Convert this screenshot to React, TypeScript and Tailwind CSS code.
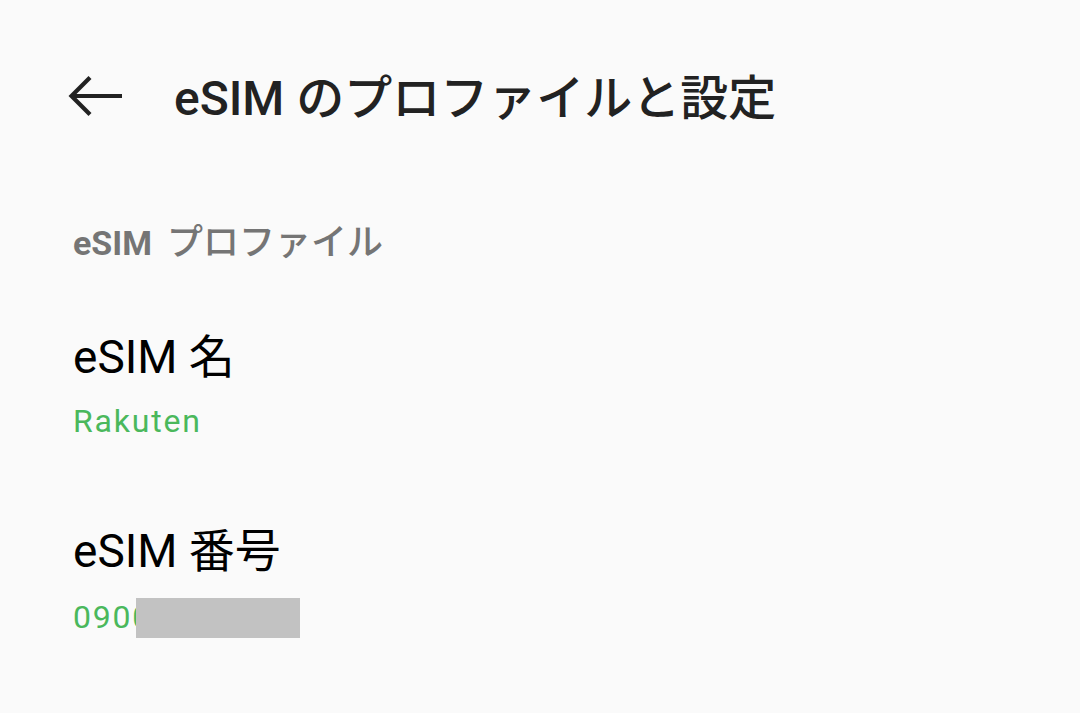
import React from "react";

export default function App() {
  return (
    <div
      className="min-h-screen w-full bg-[#fafafa]"
      style={{ fontFamily: 'Roboto, "Noto Sans CJK JP", sans-serif' }}
    >
      <div className="flex items-start pt-[75px] pl-[67px]">
        <svg
          width="56"
          height="40"
          viewBox="0 0 56 40"
          className="mt-[1px] shrink-0"
          fill="none"
          stroke="#222222"
          strokeWidth="4.2"
          strokeLinecap="butt"
          strokeLinejoin="miter"
        >
          <path d="M4 20 H55" />
          <path d="M23 1.5 L4.5 20 L23 38.5" />
        </svg>
        <h1 className="ml-[51px] text-[48px] leading-[48px] font-medium text-[#222222] whitespace-nowrap">
          eSIM のプロファイルと設定
        </h1>
      </div>

      <div className="pl-[73px]">
        <div className="mt-[103px] h-[34px] leading-[34px] text-[#757575] whitespace-nowrap">
          <span className="text-[34px] font-bold">eSIM</span>
          <span className="ml-[6px] text-[36px] font-medium"> プロファイル</span>
        </div>

        <div className="mt-[74px] text-[46px] leading-[46px] text-black whitespace-nowrap">
          eSIM 名
        </div>
        <div className="mt-[26px] text-[32px] leading-[31px] tracking-[1.8px] text-[#4ab85c] whitespace-nowrap">
          Rakuten
        </div>

        <div className="mt-[91px] text-[46px] leading-[46px] text-black whitespace-nowrap">
          eSIM 番号
        </div>
        <div className="relative mt-[28px] text-[32px] leading-[31px] tracking-[1.8px] text-[#4ab85c] whitespace-nowrap">
          09000000
          <div className="absolute left-[63px] top-[-4px] h-[40px] w-[164px] bg-[#c2c2c2]" />
        </div>
      </div>
    </div>
  );
}
